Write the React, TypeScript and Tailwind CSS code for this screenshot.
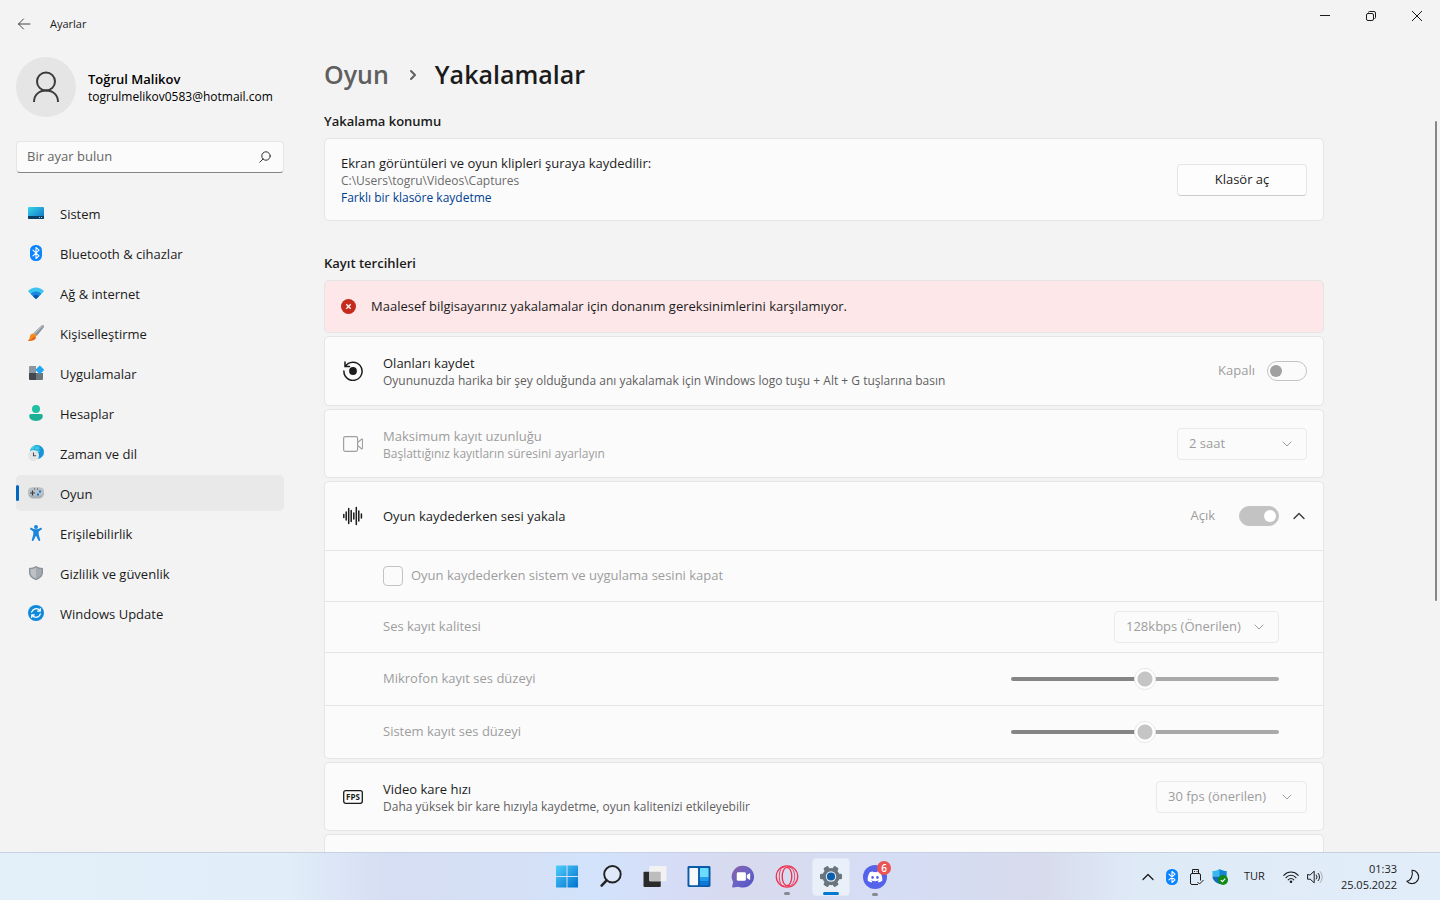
import React from 'react';
import { FaDiscord } from 'react-icons/fa';

type IconProps = { className?: string };

/* ── Sidebar icons ─────────────────────────────────────────── */

const SystemIcon = () => (
  <svg viewBox="0 0 16 16" className="h-4 w-4">
    <defs>
      <linearGradient id="sys" x1="0" y1="0" x2="1" y2="1">
        <stop offset="0" stopColor="#37d5e8" />
        <stop offset="1" stopColor="#0d6fc6" />
      </linearGradient>
    </defs>
    <rect y="2" width="16" height="12" rx="1" fill="url(#sys)" />
    <path d="M0 11h16v2a1 1 0 0 1-1 1H1a1 1 0 0 1-1-1z" fill="#0c3f66" />
    <path d="M11 12h1v1h-1zM13 12h1v1h-1z" fill="#8fd3f5" />
  </svg>
);

const BluetoothIcon = ({ className = 'h-4 w-4' }: IconProps) => (
  <svg viewBox="0 0 16 16" className={className}>
    <rect x="2" width="12" height="16" rx="5.5" fill="#0a84ff" />
    <path d="M5 5.2l6 5.6-3 2.7v-11l3 2.7-6 5.6" fill="none" stroke="#fff" strokeWidth="1.1" strokeLinejoin="round" strokeLinecap="round" />
  </svg>
);

const NetworkIcon = () => (
  <svg viewBox="0 0 16 16" className="h-4 w-4">
    <path d="M0 6.2C4.4 1.4 11.6 1.4 16 6.2L8.6 13.6a.8.8 0 0 1-1.2 0z" fill="#3cc4f0" />
    <path d="M2.7 8.9c3-3.2 7.6-3.2 10.6 0l-4.7 4.7a.8.8 0 0 1-1.2 0z" fill="#1a87dc" />
    <path d="M5 11.2c1.7-1.7 4.3-1.7 6 0l-2.4 2.4a.8.8 0 0 1-1.2 0z" fill="#0c55a8" />
  </svg>
);

const BrushIcon = () => (
  <svg viewBox="0 0 16 16" className="h-4 w-4">
    <path d="M15.6.4c.6.6.4 1.4 0 2L8.800 11 5.4 8.200 13.6.5c.6-.5 1.4-.6 2-.1z" fill="#8a939b" />
    <path d="M13.6.5L5.4 8.200l1.400 1.100L15.500.4c-.6-.4-1.400-.3-1.900.1z" fill="#b3bac0" />
    <path d="M5 8.600c1.400-.3 3.300 1.100 3.200 2.900C8 14.300 4.900 16 .6 15.700c-.4 0-.6-.4-.2-.7 1.300-.9 1.100-1.700 1.500-3.400.4-1.800 1.600-2.700 3.100-3z" fill="#f68b1f" />
    <path d="M.4 15c1.800.2 4-.5 5.400-3.400l2 1.600c-1.200 1.900-3.800 2.700-7.200 2.500-.4 0-.6-.4-.2-.7z" fill="#e2611b" />
  </svg>
);

const AppsIcon = () => (
  <svg viewBox="0 0 16 16" className="h-4 w-4">
    <path d="M1 2a1 1 0 0 1 1-1h6v7H1z" fill="#8e979f" />
    <path d="M1 8h7v7H2a1 1 0 0 1-1-1z" fill="#41474d" />
    <path d="M8 8h7v6a1 1 0 0 1-1 1H8z" fill="#6d757c" />
    <rect x="8.6" y="1.6" width="6.4" height="6.4" rx=".9" transform="rotate(45 11.8 4.8)" fill="#21a5ee" />
  </svg>
);

const AccountsIcon = () => (
  <svg viewBox="0 0 16 16" className="h-4 w-4">
    <circle cx="8" cy="4" r="4" fill="#1fc0a4" />
    <path d="M3 9h10a1.8 1.8 0 0 1 1.8 1.8C14.8 14 12 16 8 16s-6.8-2-6.8-5.2A1.8 1.8 0 0 1 3 9z" fill="#19b096" />
  </svg>
);

const TimeIcon = () => (
  <svg viewBox="0 0 16 16" className="h-4 w-4">
    <circle cx="9" cy="7" r="7" fill="#1796dc" />
    <path d="M9 0a7 7 0 0 0-7 7h10C13 4 12 1 9 0z" fill="#3fd0e6" />
    <path d="M2.5 5h13M9 0c4 4 4 10 0 14M9 0C5 4 5 10 9 14" fill="none" stroke="#1581c9" strokeWidth=".6" />
    <circle cx="5.5" cy="10.5" r="5.5" fill="#e3e5e7" />
    <path d="M5.5 7.5v3.3h2.6" fill="none" stroke="#4b5157" strokeWidth="1.1" />
  </svg>
);

const GamingIcon = () => (
  <svg viewBox="0 0 16 16" className="h-4 w-4">
    <rect y="2.5" width="16" height="11" rx="5.3" fill="#a9b1b8" />
    <rect y="2.5" width="16" height="8" rx="4" fill="#bac1c7" />
    <path d="M4.5 5.500v5M2 8h5" stroke="#3a4046" strokeWidth="1.2" />
    <path d="M6 3.500h1v1H6zM9 3.500h1v1H9z" fill="#3a4046" />
    <path d="M11 5.500h2v2h-2zM9 8.500h2v2H9z" fill="#1576cf" />
  </svg>
);

const AccessibilityIcon = () => (
  <svg viewBox="0 0 16 16" className="h-4 w-4" fill="#1a86dd">
    <circle cx="8" cy="2" r="2" />
    <path d="M2.2 3.200c.4-.5 1-.5 1.500-.2C6.500 4.700 9.500 4.700 12.300 3c.5-.3 1.100-.3 1.500.2.300.5.200 1.100-.3 1.400L10.700 6.500v3l1.500 5.200c.2 1.100-1.400 1.700-1.900.6L8.200 11h-.4l-2.100 4.300c-.5 1.100-2.100.5-1.900-.6l1.500-5.200v-3L2.500 4.600c-.5-.3-.6-.9-.3-1.400z" />
  </svg>
);

const PrivacyIcon = () => (
  <svg viewBox="0 0 16 16" className="h-4 w-4">
    <path d="M8 1c2 1.3 4.3 2 7 2v4.500c0 3.800-3 6.200-7 7.700-4-1.500-7-3.900-7-7.700V3c2.700 0 5-.7 7-2z" fill="#8b9299" />
    <path d="M8 2.500c1.700 1 3.500 1.500 5.600 1.600v3.400c0 3-2.300 4.900-5.600 6.200z" fill="#a3a9ae" />
    <path d="M8 2.500c-1.700 1-3.500 1.500-5.600 1.600v3.400c0 3 2.300 4.900 5.600 6.200z" fill="#bcc1c5" />
  </svg>
);

const UpdateIcon = () => (
  <svg viewBox="0 0 16 16" className="h-4 w-4">
    <circle cx="8" cy="8" r="8" fill="#1089dd" />
    <path d="M3.7 7.2A4.6 4.6 0 0 1 12 5.8M12.3 3.5v2.7H9.6M12.3 8.8A4.6 4.6 0 0 1 4 10.2M3.7 12.5V9.800h2.7" fill="none" stroke="#fff" strokeWidth="1.2" strokeLinecap="round" strokeLinejoin="round" />
  </svg>
);

/* ── Setting icons ─────────────────────────────────────────── */

const ReplayIcon = () => (
  <svg viewBox="0 0 20 20" className="h-5 w-5 text-[#1b1b1b]" fill="none" stroke="currentColor" strokeWidth="1.5" strokeLinecap="round">
    <path d="M2.3 5.400A9.100 9.100 0 1 1 .9 10M2 1v4.500h4.500" />
    <circle cx="10" cy="10" r="3.9" fill="currentColor" stroke="none" />
  </svg>
);

const CameraIcon = () => (
  <svg viewBox="0 0 20 20" className="h-5 w-5 text-[#a0a0a0]" fill="none" stroke="currentColor" strokeWidth="1.2" strokeLinejoin="round">
    <rect x=".6" y="2.6" width="14" height="14.8" rx="1.8" />
    <path d="M14.6 8.600l3.900-3.300c.4-.4 1-.1 1 .4v8.600c0 .5-.6.8-1 .4l-3.900-3.300" />
  </svg>
);

const WaveIcon = () => (
  <svg viewBox="0 0 20 20" className="h-5 w-5 text-[#1b1b1b]" fill="none" stroke="currentColor" strokeWidth="1.5" strokeLinecap="round">
    <path d="M.8 8.500v3M3.200 6v8M5.700 2.500v15M8.200 4.500v11M10.800 7v6M13.300 1.500v17M15.800 5v10M18.400 8v4" />
  </svg>
);

const FpsIcon = () => (
  <svg viewBox="0 0 20 20" className="h-5 w-5 text-[#1b1b1b]">
    <rect x=".7" y="3.7" width="18.6" height="12.6" rx="2" fill="none" stroke="currentColor" strokeWidth="1.3" />
    <text x="10" y="12.9" textAnchor="middle" fontSize="8" fontWeight="700" fontFamily="Open Sans, sans-serif" fill="currentColor">FPS</text>
  </svg>
);

const Chevron = ({ className }: IconProps) => (
  <svg viewBox="0 0 16 16" className={className} fill="none" stroke="currentColor" strokeLinecap="round" strokeLinejoin="round">
    <path d="M4 6l4 4 4-4" />
  </svg>
);

/* ── Taskbar icons ─────────────────────────────────────────── */

const StartIcon = () => (
  <svg viewBox="0 0 24 24" className="h-6 w-6">
    <defs>
      <linearGradient id="win" x1="0" y1="0" x2="24" y2="24" gradientUnits="userSpaceOnUse">
        <stop offset="0" stopColor="#4fd0fb" />
        <stop offset="1" stopColor="#006fce" />
      </linearGradient>
    </defs>
    <path d="M1 .6h10.500v11H.5V1zM12.500.6h10.500l.5.5v10.500h-11zM.5 12.600h11v11H1l-.5-.5zM12.500 12.600h11v10.500l-.5.5H12.500z" fill="url(#win)" />
  </svg>
);

const TaskSearchIcon = () => (
  <svg viewBox="0 0 24 24" className="h-6 w-6" fill="none" stroke="#222" strokeLinecap="round">
    <circle cx="13.5" cy="9.7" r="8.6" strokeWidth="2" fill="#dfe9fa" />
    <path d="M7.5 16L2.200 21.600" strokeWidth="2.6" />
  </svg>
);

const TaskViewIcon = () => (
  <svg viewBox="0 0 24 24" className="h-6 w-6">
    <rect y="7" width="18" height="16" rx="1" fill="#2a2a2a" />
    <rect x="6" y="1" width="18" height="16" rx="1" fill="#f2f2f2" />
    <path d="M6 7h12v10H7a1 1 0 0 1-1-1z" fill="#bdbdbd" />
  </svg>
);

const WidgetsIcon = () => (
  <svg viewBox="0 0 24 24" className="h-6 w-6">
    <rect y="1" width="24" height="22" rx="1.5" fill="#0c5ba8" />
    <rect x="2" y="3" width="9" height="18" rx="1" fill="#f6f8fa" />
    <path d="M13 4a1 1 0 0 1 1-1h7a1 1 0 0 1 1 1v9h-9z" fill="#6bdcff" />
    <path d="M13 13h9v4h-9z" fill="#1e9cf0" />
    <path d="M13 17h9v3a1 1 0 0 1-1 1h-7a1 1 0 0 1-1-1z" fill="#0d7ada" />
  </svg>
);

const ChatIcon = () => (
  <svg viewBox="0 0 24 24" className="h-6 w-6">
    <defs>
      <linearGradient id="chat" x1="0" y1="0" x2="1" y2="1">
        <stop offset="0" stopColor="#8d5fa8" />
        <stop offset=".5" stopColor="#6a63c4" />
        <stop offset="1" stopColor="#4e50c8" />
      </linearGradient>
    </defs>
    <path d="M12 .8a11.400 11.400 0 1 1-4.600 21.800L1.600 23.500c-.7.1-1.100-.5-.9-1.100l1-4.600A11.400 11.400 0 0 1 12 .8z" fill="url(#chat)" />
    <rect x="5.5" y="7.5" width="9.5" height="9" rx="1.5" fill="#fff" />
    <path d="M16 10.500l2.800-2c.4-.2.7 0 .7.4v6.200c0 .4-.3.6-.7.4l-2.800-2z" fill="#fff" />
  </svg>
);

const OperaIcon = () => (
  <svg viewBox="0 0 24 24" className="h-6 w-6" fill="none" stroke="#f0304f">
    <circle cx="12" cy="12" r="11.2" strokeWidth="1.3" />
    <ellipse cx="12" cy="12" rx="5" ry="9.5" strokeWidth="1.4" />
    <path d="M9 2.200C5.500 1.800 4 7 4 12s1.500 10.200 5 9.800M12 2.500c5-2 8 4 8 9.500s-3 11.500-8 9.500" strokeWidth="1" />
  </svg>
);

const SettingsIcon = () => (
  <svg viewBox="0 0 24 24" className="h-6 w-6">
    <g fill="#69747d">
      <circle cx="12" cy="12" r="9" />
      <rect x="9.2" y=".5" width="5.6" height="23" rx="1.3" transform="rotate(30 12 12)" />
      <rect x="9.2" y=".5" width="5.6" height="23" rx="1.3" transform="rotate(90 12 12)" />
      <rect x="9.2" y=".5" width="5.6" height="23" rx="1.3" transform="rotate(150 12 12)" />
    </g>
    <circle cx="12" cy="12" r="5.4" fill="#e9f1f8" />
    <circle cx="12" cy="12" r="4.3" fill="#0c5fae" />
  </svg>
);

const DiscordIcon = () => (
  <span className="relative grid h-6 w-6 shrink-0 place-items-center rounded-full bg-[#5562ea] text-white">
    <FaDiscord className="h-4 w-4" />
    <span className="absolute -top-1 left-[14px] grid h-[14px] w-[14px] place-items-center rounded-full bg-[#ec5354] text-[10px] leading-none font-semibold">6</span>
  </span>
);

const UsbIcon = () => (
  <svg viewBox="0 0 16 18" className="h-[18px] w-4" fill="none" stroke="#1b1b1b">
    <path d="M4.500 5.500v-4h6v4M10 16.500H4a1.500 1.500 0 0 1-1.500-1.500V7A1.500 1.500 0 0 1 4 5.500h7A1.500 1.500 0 0 1 12.500 7v5.500M6 3.500h1M8.500 3.500h1M9.500 14l2 2 4-4" />
  </svg>
);

const DefenderIcon = () => (
  <svg viewBox="0 0 16 16" className="h-4 w-4">
    <path d="M7.500 0c2 1.500 4.500 2 7 2v5.500H.5V2c2.500 0 5-.5 7-2z" fill="#35b9ee" />
    <path d="M7.500 0c2 1.500 4.500 2 7 2v5.500h-7z" fill="#1584d6" />
    <path d="M.5 7.500h14c0 3.500-3 6-7 7.500-4-1.500-7-4-7-7.500z" fill="#0f6dbd" />
    <circle cx="11" cy="11" r="5" fill="#0f8a16" />
    <path d="M8.800 11.100l1.600 1.600 2.800-3" fill="none" stroke="#fff" strokeWidth="1.2" />
  </svg>
);

const WifiIcon = () => (
  <svg viewBox="0 0 16 16" className="h-4 w-4" fill="none" stroke="#1b1b1b" strokeWidth="1.1" strokeLinecap="round">
    <path d="M.8 6.300c4-4.400 10.400-4.400 14.400 0M3 8.600c2.800-3.200 7.200-3.200 10 0M5.200 10.900c1.600-1.900 4-1.900 5.600 0" />
    <circle cx="8" cy="12.800" r="1.300" fill="#1b1b1b" stroke="none" />
  </svg>
);

const VolumeIcon = () => (
  <svg viewBox="0 0 16 16" className="h-4 w-4" fill="none" stroke="#1b1b1b" strokeLinecap="round" strokeLinejoin="round">
    <path d="M.6 5.800v4.400h2.600l4 3.600V2.200l-4 3.600zM9.300 6a3 3 0 0 1 0 4M11.200 4.300a5.500 5.500 0 0 1 0 7.400" />
    <path d="M13.200 2.500a8 8 0 0 1 0 11" stroke="#a5adb5" />
  </svg>
);

const MoonIcon = () => (
  <svg viewBox="0 0 16 16" className="h-4 w-4" fill="none" stroke="#1b1b1b" strokeWidth="1.1" strokeLinejoin="round">
    <path d="M7 1.200a6.700 6.700 0 1 1-5.200 11C6 11.600 8.300 6.500 7 1.200z" />
  </svg>
);

/* ── Controls ──────────────────────────────────────────────── */

const Switch = ({ id, on }: { id: string; on?: boolean }) => (
  <input
    id={id}
    type="checkbox"
    role="switch"
    disabled
    defaultChecked={on}
    className="flex h-5 w-10 shrink-0 appearance-none items-center rounded-full border border-[#c3c3c3] bg-[#fbfbfb] px-[2px] before:h-3 before:w-3 before:rounded-full before:bg-[#a0a0a0] checked:justify-end checked:bg-[#c3c3c3] checked:before:bg-white"
  />
);

const Dropdown = ({ label, value, className }: { label: string; value: string; className: string }) => (
  <div className={`relative h-8 shrink-0 ${className}`}>
    <select
      aria-label={label}
      disabled
      className="h-full w-full appearance-none rounded border border-[#eaeaea] bg-[#fbfbfb] pl-[11px] text-[13px] text-[#9d9d9d] opacity-100"
    >
      <option>{value}</option>
    </select>
    <Chevron className="pointer-events-none absolute top-2 right-3 h-4 w-4 text-[#9d9d9d]" />
  </div>
);

const VolumeSlider = ({ id }: { id: string }) => (
  <input
    id={id}
    type="range"
    min={0}
    max={100}
    defaultValue={50}
    disabled
    className="h-[22px] w-[268px] appearance-none bg-transparent [&::-webkit-slider-runnable-track]:h-1 [&::-webkit-slider-runnable-track]:rounded-full [&::-webkit-slider-runnable-track]:bg-[linear-gradient(to_right,#858585_50%,#a9a9a9_50%)] [&::-webkit-slider-thumb]:-mt-[9px] [&::-webkit-slider-thumb]:h-[22px] [&::-webkit-slider-thumb]:w-[22px] [&::-webkit-slider-thumb]:appearance-none [&::-webkit-slider-thumb]:rounded-full [&::-webkit-slider-thumb]:border [&::-webkit-slider-thumb]:border-[#e8e8e8] [&::-webkit-slider-thumb]:bg-[radial-gradient(circle,#c5c5c5_7px,#ffffff_8px)]"
  />
);

type CardProps = {
  icon: React.ReactNode;
  title: string;
  description?: string;
  muted?: boolean;
  htmlFor?: string;
  height?: string;
  children?: React.ReactNode;
};

const CardHeader = ({ icon, title, description, muted, htmlFor, height = 'h-[68px]', children }: CardProps) => (
  <div className={`flex items-center px-4 ${height}`}>
    <span className="mr-[18px] grid w-6 shrink-0 place-items-center">{icon}</span>
    <div className="min-w-0 flex-1">
      <label htmlFor={htmlFor} className={`block text-[13px] leading-5 ${muted ? 'text-[#9d9d9d]' : 'text-[#1b1b1b]'}`}>{title}</label>
      {description && (
        <p className={`text-[12px] leading-4 ${muted ? 'text-[#9d9d9d]' : 'text-[#5f5f5f]'}`}>{description}</p>
      )}
    </div>
    {children}
  </div>
);

const card = 'rounded-[5px] border border-[#e5e5e5] bg-[#fbfbfb]';

const navItems = [
  { label: 'Sistem', icon: <SystemIcon /> },
  { label: 'Bluetooth & cihazlar', icon: <BluetoothIcon /> },
  { label: 'Ağ & internet', icon: <NetworkIcon /> },
  { label: 'Kişiselleştirme', icon: <BrushIcon /> },
  { label: 'Uygulamalar', icon: <AppsIcon /> },
  { label: 'Hesaplar', icon: <AccountsIcon /> },
  { label: 'Zaman ve dil', icon: <TimeIcon /> },
  { label: 'Oyun', icon: <GamingIcon />, active: true },
  { label: 'Erişilebilirlik', icon: <AccessibilityIcon /> },
  { label: 'Gizlilik ve güvenlik', icon: <PrivacyIcon /> },
  { label: 'Windows Update', icon: <UpdateIcon /> },
];

const taskbarApps = [
  { label: 'Başlat', icon: <StartIcon /> },
  { label: 'Ara', icon: <TaskSearchIcon /> },
  { label: 'Görev görünümü', icon: <TaskViewIcon /> },
  { label: 'Pencere öğeleri', icon: <WidgetsIcon /> },
  { label: 'Sohbet', icon: <ChatIcon /> },
  { label: 'Opera', icon: <OperaIcon />, running: true },
  { label: 'Ayarlar', icon: <SettingsIcon />, focused: true },
  { label: 'Discord', icon: <DiscordIcon />, running: true },
];

/* ── Layout ────────────────────────────────────────────────── */

const TitleBar = () => (
  <header className="flex h-12 shrink-0 items-start justify-between text-[#1b1b1b]">
    <div className="flex h-12 items-center">
      <button aria-label="Geri" className="grid h-10 w-12 place-items-center">
        <svg viewBox="0 0 16 16" className="h-4 w-4" fill="none" stroke="#444" strokeLinecap="round" strokeLinejoin="round">
          <path d="M2.500 8H14M7.500 3l-5 5 5 5" />
        </svg>
      </button>
      <span className="ml-[2px] text-[11px]">Ayarlar</span>
    </div>
    <div className="flex">
      <button aria-label="Simge durumuna küçült" className="grid h-8 w-[46px] place-items-center">
        <svg viewBox="0 0 10 10" className="h-[10px] w-[10px]" stroke="#1b1b1b"><path d="M0 4.500h10" /></svg>
      </button>
      <button aria-label="Önceki boyut" className="grid h-8 w-[46px] place-items-center">
        <svg viewBox="0 0 10 10" className="h-[10px] w-[10px]" fill="none" stroke="#1b1b1b">
          <rect x=".5" y="2.5" width="7" height="7" rx="1.5" />
          <path d="M2.500 1.500A1 1 0 0 1 3.500.5H8A1.500 1.500 0 0 1 9.500 2v4.500a1 1 0 0 1-1 1" />
        </svg>
      </button>
      <button aria-label="Kapat" className="grid h-8 w-[46px] place-items-center">
        <svg viewBox="0 0 10 10" className="h-[10px] w-[10px]" stroke="#1b1b1b"><path d="M0 0l10 10M10 0L0 10" /></svg>
      </button>
    </div>
  </header>
);

const Sidebar = () => (
  <aside className="w-[300px] shrink-0 px-4 pt-[9px]">
    <div className="flex items-center gap-3">
      <div className="grid h-[60px] w-[60px] shrink-0 place-items-center rounded-full bg-[#e5e5e5]">
        <svg viewBox="0 0 28 32" className="h-8 w-7" fill="none" stroke="#3b3b3b" strokeWidth="2">
          <circle cx="14" cy="10.5" r="9" />
          <path d="M2 31c0-7 5-11.500 12-11.500S26 24 26 31" />
        </svg>
      </div>
      <div className="text-black">
        <p className="text-[13px] leading-5 font-semibold">Toğrul Malikov</p>
        <p className="text-[12px] leading-4">togrulmelikov0583@hotmail.com</p>
      </div>
    </div>

    <div className="mt-6 flex h-8 items-center rounded border border-[#e5e5e5] border-b-[#868686] bg-[#fbfbfb] pr-3 pl-[10px]">
      <input
        type="text"
        aria-label="Bir ayar bulun"
        placeholder="Bir ayar bulun"
        className="min-w-0 flex-1 bg-transparent text-[13px] outline-none placeholder:text-[#666]"
      />
      <svg viewBox="0 0 12 12" className="h-3 w-3" fill="none" stroke="#333" strokeLinecap="round">
        <circle cx="7" cy="5" r="4.2" />
        <path d="M4 8L.8 11.200" />
      </svg>
    </div>

    <nav className="mt-[22px] flex flex-col gap-1">
      {navItems.map((item) => (
        <a
          key={item.label}
          href="#"
          aria-current={item.active ? 'page' : undefined}
          className={`flex h-9 items-center rounded-[5px] text-[13px] text-[#1b1b1b] ${item.active ? 'bg-[#e9e9e9]' : ''}`}
        >
          <span className={`h-4 w-[3px] rounded-full ${item.active ? 'bg-[#0067c0]' : ''}`} />
          <span className="mr-4 ml-[9px]">{item.icon}</span>
          <span className="pt-[3px]">{item.label}</span>
        </a>
      ))}
    </nav>
  </aside>
);

const Captures = () => (
  <main className="min-w-0 flex-1 overflow-hidden px-6 pt-[7px]">
    <div className="max-w-[1000px]">
      <div className="flex h-10 items-center text-[25px] font-semibold">
        <a href="#" className="text-[#5f5f5f]">Oyun</a>
        <Chevron className="mr-[14px] ml-4 h-4 w-4 -rotate-90 stroke-2 text-[#5f5f5f]" />
        <h1 className="text-[#1b1b1b]">Yakalamalar</h1>
      </div>

      <h2 className="mt-4 text-[13px] leading-5 font-semibold text-[#1b1b1b]">Yakalama konumu</h2>
      <section className={`mt-[7px] flex h-[83px] items-center px-4 ${card}`}>
        <div className="flex-1">
          <p className="text-[13px] leading-5 text-[#1b1b1b]">Ekran görüntüleri ve oyun klipleri şuraya kaydedilir:</p>
          <p className="text-[12px] leading-4 text-[#6b6b6b]">C:\Users\togru\Videos\Captures</p>
          <a href="#" className="block text-[12px] leading-[18px] text-[#003e92]">Farklı bir klasöre kaydetme</a>
        </div>
        <button className="h-8 w-[130px] rounded border border-[#e5e5e5] border-b-[#cccccc] bg-[#fdfdfd] text-[13px] text-[#1b1b1b]">Klasör aç</button>
      </section>

      <h2 className="mt-8 text-[13px] leading-5 font-semibold text-[#1b1b1b]">Kayıt tercihleri</h2>
      <div className="mt-[7px] flex flex-col gap-[3px]">
        <div role="alert" className="flex h-[53px] items-center rounded-[5px] border border-[#e5e5e5] bg-[#fde7e9] px-4 text-[13px] text-[#1b1b1b]">
          <svg viewBox="0 0 15 15" className="mr-[15px] h-[15px] w-[15px]">
            <circle cx="7.5" cy="7.5" r="7.5" fill="#c42b1c" />
            <path d="M5.300 5.300l4.400 4.400M9.700 5.300L5.300 9.700" stroke="#fff" strokeWidth="1.3" />
          </svg>
          Maalesef bilgisayarınız yakalamalar için donanım gereksinimlerini karşılamıyor.
        </div>

        <section className={card}>
          <CardHeader
            icon={<ReplayIcon />}
            title="Olanları kaydet"
            description="Oyununuzda harika bir şey olduğunda anı yakalamak için Windows logo tuşu + Alt + G tuşlarına basın"
            htmlFor="record"
          >
            <span className="mr-3 text-[13px] text-[#9d9d9d]">Kapalı</span>
            <Switch id="record" />
          </CardHeader>
        </section>

        <section className={card}>
          <CardHeader icon={<CameraIcon />} title="Maksimum kayıt uzunluğu" description="Başlattığınız kayıtların süresini ayarlayın" height="h-[67px]" muted>
            <Dropdown label="Maksimum kayıt uzunluğu" value="2 saat" className="w-[130px]" />
          </CardHeader>
        </section>

        <section className={`overflow-hidden ${card}`}>
          <CardHeader icon={<WaveIcon />} title="Oyun kaydederken sesi yakala" htmlFor="audio">
            <span className="mr-6 text-[13px] text-[#9d9d9d]">Açık</span>
            <Switch id="audio" on />
            <button aria-label="Daralt" className="ml-3">
              <Chevron className="h-4 w-4 rotate-180 scale-125 text-[#333]" />
            </button>
          </CardHeader>
          <div className="flex h-[51px] items-center border-t border-[#e5e5e5] pr-11 pl-[58px]">
            <input id="mute" type="checkbox" disabled className="h-5 w-5 appearance-none rounded border border-[#c3c3c3] bg-[#fbfbfb]" />
            <label htmlFor="mute" className="ml-2 text-[13px] text-[#9d9d9d]">Oyun kaydederken sistem ve uygulama sesini kapat</label>
          </div>
          <div className="flex h-[51px] items-center justify-between border-t border-[#e5e5e5] pr-11 pl-[58px]">
            <span className="text-[13px] text-[#9d9d9d]">Ses kayıt kalitesi</span>
            <Dropdown label="Ses kayıt kalitesi" value="128kbps (Önerilen)" className="w-[165px]" />
          </div>
          <div className="flex h-[53px] items-center justify-between border-t border-[#e5e5e5] pr-11 pl-[58px]">
            <label htmlFor="mic" className="text-[13px] text-[#9d9d9d]">Mikrofon kayıt ses düzeyi</label>
            <VolumeSlider id="mic" />
          </div>
          <div className="flex h-[53px] items-center justify-between border-t border-[#e5e5e5] pr-11 pl-[58px]">
            <label htmlFor="sys-volume" className="text-[13px] text-[#9d9d9d]">Sistem kayıt ses düzeyi</label>
            <VolumeSlider id="sys-volume" />
          </div>
        </section>

        <section className={card}>
          <CardHeader icon={<FpsIcon />} title="Video kare hızı" description="Daha yüksek bir kare hızıyla kaydetme, oyun kalitenizi etkileyebilir" height="h-[67px]">
            <Dropdown label="Video kare hızı" value="30 fps (önerilen)" className="w-[151px]" />
          </CardHeader>
        </section>

        <section className={`h-[69px] ${card}`} />
      </div>
    </div>
  </main>
);

const Taskbar = () => (
  <footer className="grid h-12 shrink-0 grid-cols-[1fr_auto_1fr] items-center border-t border-[#c6d1e3] bg-[linear-gradient(to_right,#e3eff9_0%,#e1edf8_20%,#d6def3_27%,#d5e0f6_36%,#d2e3fb_41%,#d6dcf6_47%,#d8dbee_52%,#d5ddf5_62%,#d7dbec_72%,#dfeaf7_79%,#e1edf8_100%)] pl-[2px] text-[11px] text-[#1b1b1b]">
    <span />
    <div className="flex gap-[6px]">
      {taskbarApps.map((app) => (
        <button
          key={app.label}
          aria-label={app.label}
          className={`flex h-[38px] w-[38px] flex-col items-center rounded border pt-[6px] ${app.focused ? 'border-[#e3e8f4] bg-[#eaf0fa]' : 'border-transparent'}`}
        >
          {app.icon}
          <span className={`mt-1 h-[3px] shrink-0 rounded-full ${app.focused ? 'w-4 bg-[#0078d4]' : app.running ? 'w-[6px] bg-[#868a92]' : ''}`} />
        </button>
      ))}
    </div>
    <div className="flex items-center justify-end pr-[19px]">
      <button aria-label="Gizli simgeler" className="mr-2"><Chevron className="h-4 w-4 rotate-180 scale-125" /></button>
      <BluetoothIcon className="mr-2 h-4 w-4" />
      <span className="mr-2"><UsbIcon /></span>
      <DefenderIcon />
      <span className="mr-[18px] ml-4">TUR</span>
      <span className="mr-2"><WifiIcon /></span>
      <VolumeIcon />
      <div className="mr-2 ml-[18px] text-right leading-4">
        <p>01:33</p>
        <p>25.05.2022</p>
      </div>
      <MoonIcon />
    </div>
  </footer>
);

export default function App() {
  return (
    <div className="flex h-screen flex-col overflow-hidden bg-[#f3f3f3] font-['Open_Sans','Noto_Sans',sans-serif]">
      <div className="flex min-h-0 flex-1 flex-col">
        <TitleBar />
        <div className="flex min-h-0 flex-1">
          <Sidebar />
          <Captures />
          <div className="w-[5px] shrink-0 pt-[73px]">
            <div className="h-[480px] w-[2px] rounded-full bg-[#868686]" />
          </div>
        </div>
      </div>
      <Taskbar />
    </div>
  );
}
